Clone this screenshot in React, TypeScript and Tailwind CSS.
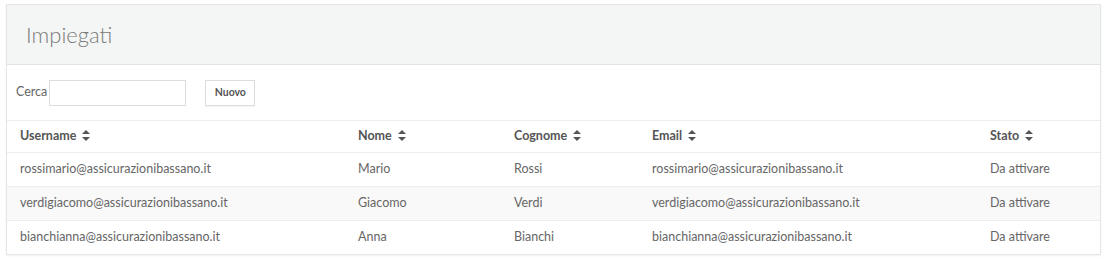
const rows = [
  { username: 'rossimario@assicurazionibassano.it', nome: 'Mario', cognome: 'Rossi', email: 'rossimario@assicurazionibassano.it', stato: 'Da attivare' },
  { username: 'verdigiacomo@assicurazionibassano.it', nome: 'Giacomo', cognome: 'Verdi', email: 'verdigiacomo@assicurazionibassano.it', stato: 'Da attivare' },
  { username: 'bianchianna@assicurazionibassano.it', nome: 'Anna', cognome: 'Bianchi', email: 'bianchianna@assicurazionibassano.it', stato: 'Da attivare' },
];

function SortIcon() {
  return (
    <svg width="8" height="11" viewBox="0 0 8 11" className="ml-[6px] inline-block align-[-1px]" fill="#555">
      <path d="M4 0 L8 4 H0 Z" />
      <path d="M4 11 L8 7 H0 Z" />
    </svg>
  );
}

const cols = [
  { key: 'username', label: 'Username', w: 'w-[338px]' },
  { key: 'nome', label: 'Nome', w: 'w-[156px]' },
  { key: 'cognome', label: 'Cognome', w: 'w-[138px]' },
  { key: 'email', label: 'Email', w: 'w-[338px]' },
  { key: 'stato', label: 'Stato', w: '' },
] as const;

export default function App() {
  return (
    <div className="w-[1105px] h-[257px] bg-white pt-[4px] pl-[6px] font-['Lato','Liberation_Sans',sans-serif]">
      <div className="w-[1095px] border border-[#e3e6e5] shadow-[0_1px_2px_rgba(0,0,0,0.06)] bg-white">
        <div className="h-[60px] bg-[#f4f6f5] border-b border-[#e1e5e3] flex items-center pl-[19px]">
          <h1 className="text-[22px] font-light text-[#7a7a7a]">Impiegati</h1>
        </div>
        <div className="h-[56px] flex items-center pl-[9px] border-b border-[#eceeed]">
          <span className="text-[12.5px] text-[#666]">Cerca</span>
          <input className="ml-[2px] w-[137px] h-[26px] border border-[#ddd] bg-white outline-none" />
          <button className="ml-[19px] w-[50px] h-[26px] border border-[#ddd] bg-white text-[10.5px] font-bold text-[#555] shadow-[0_1px_1px_rgba(0,0,0,0.04)]">
            Nuovo
          </button>
        </div>
        <table className="w-full border-collapse text-[12.5px]">
          <thead>
            <tr className="h-[31px] border-b border-[#eceeed]">
              {cols.map((c) => (
                <th key={c.key} className={`${c.w} text-left pl-[13px] font-bold text-[#555] text-[12.5px]`}>
                  {c.label}
                  <SortIcon />
                </th>
              ))}
            </tr>
          </thead>
          <tbody>
            {rows.map((r, i) => (
              <tr key={i} className={`h-[34px] border-b border-[#eceeed] last:border-b-0 ${i % 2 === 1 ? 'bg-[#f9f9f9]' : 'bg-white'}`}>
                <td className="pl-[13px] text-[#666]">{r.username}</td>
                <td className="pl-[13px] text-[#666]">{r.nome}</td>
                <td className="pl-[13px] text-[#666]">{r.cognome}</td>
                <td className="pl-[13px] text-[#666]">{r.email}</td>
                <td className="pl-[13px] text-[#666]">{r.stato}</td>
              </tr>
            ))}
          </tbody>
        </table>
      </div>
    </div>
  );
}
